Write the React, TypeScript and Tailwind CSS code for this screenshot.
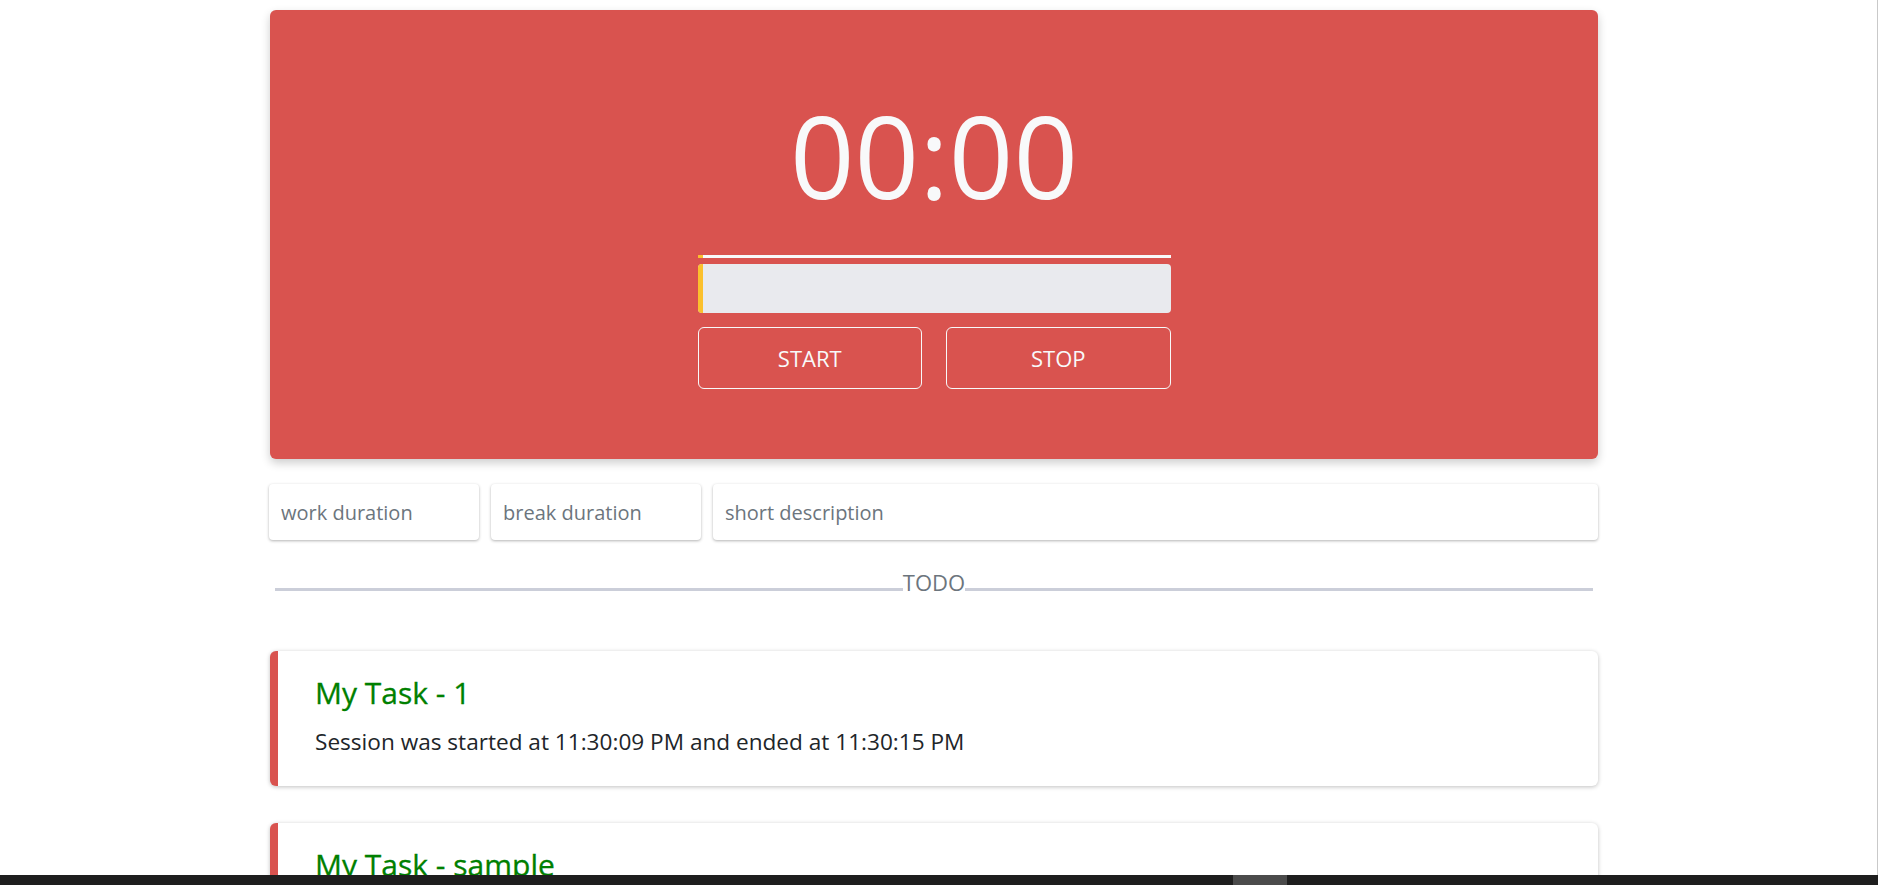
import React from 'react';

const tasks = [
  { title: 'My Task - 1', text: 'Session was started at 11:30:09 PM and ended at 11:30:15 PM' },
  { title: 'My Task - sample', text: 'Session was started at 11:28:41 PM and ended at 11:29:02 PM' },
];

export default function App() {
  return (
    <div className="min-h-screen bg-white font-['Open_Sans',sans-serif]">
      <div className="w-[1868px]">
        <div className="mx-auto w-[1328px] pt-[10px] pb-10">
          {/* timer card */}
          <div className="h-[449px] rounded-md bg-[#d9534f] shadow-[0_4px_10px_rgba(0,0,0,0.2)] flex flex-col items-center pt-[89px]">
            <div className="text-[113px] leading-none text-[#f8f9fa]">00:00</div>
            <div className="mt-[43px] w-[473px] h-[3px] flex">
              <div className="w-[5px] bg-[#fbc02d]" />
              <div className="flex-1 bg-[#f8f9fa]" />
            </div>
            <div className="mt-[6px] w-[473px] h-[49px] rounded-[4px] bg-[#e9eaee] overflow-hidden flex">
              <div className="w-[5px] bg-[#fbc02d]" />
            </div>
            <div className="mt-[14px] w-[473px] flex gap-[24px]">
              <button className="flex-1 h-[62px] rounded-md border border-[#f8f9fa] text-[22px] text-[#f8f9fa]">START</button>
              <button className="flex-1 h-[62px] rounded-md border border-[#f8f9fa] text-[22px] text-[#f8f9fa]">STOP</button>
            </div>
          </div>

          {/* settings */}
          <div className="mt-[25px] flex gap-[12px] -ml-px">
            <input placeholder="work duration" className="w-[210px] h-[56px] rounded-[4px] bg-white px-3 text-[20px] shadow-[0_1px_3px_rgba(0,0,0,0.3)] outline-none placeholder:text-[#6c757d]" />
            <input placeholder="break duration" className="w-[210px] h-[56px] rounded-[4px] bg-white px-3 text-[20px] shadow-[0_1px_3px_rgba(0,0,0,0.3)] outline-none placeholder:text-[#6c757d]" />
            <input placeholder="short description" className="flex-1 h-[56px] rounded-[4px] bg-white px-3 text-[20px] shadow-[0_1px_3px_rgba(0,0,0,0.3)] outline-none placeholder:text-[#6c757d]" />
          </div>

          {/* divider */}
          <div className="mt-[31px] px-[5px] flex items-end">
            <div className="flex-1 h-[3px] mb-[2px] bg-[#cbced9]" />
            <span className="text-[22px] leading-none text-[#6c757d]">TODO</span>
            <div className="flex-1 h-[3px] mb-[2px] bg-[#cbced9]" />
          </div>

          {/* tasks */}
          <div className="mt-[58px] flex flex-col gap-[37px]">
            {tasks.map((t) => (
              <div key={t.title} className="h-[135px] rounded-md border-l-[8px] border-[#d9534f] bg-white pl-[37px] pt-[27px] shadow-[0_1px_4px_rgba(0,0,0,0.25)]">
                <h4 className="text-[30px] leading-none text-[#008000] [-webkit-text-stroke:0.3px_#008000]">{t.title}</h4>
                <p className="mt-[23px] text-[22.6px] leading-none text-[#212529]">{t.text}</p>
              </div>
            ))}
          </div>
        </div>
      </div>

      {/* window chrome */}
      <div className="fixed right-0 top-0 bottom-0 w-px bg-[#c9c9c9]" />
      <div className="fixed left-0 right-0 bottom-0 h-[10px] bg-[#1e1e1e]">
        <div className="absolute left-[1233px] top-0 h-full w-[54px] bg-[#4b4b4b]" />
      </div>
    </div>
  );
}
